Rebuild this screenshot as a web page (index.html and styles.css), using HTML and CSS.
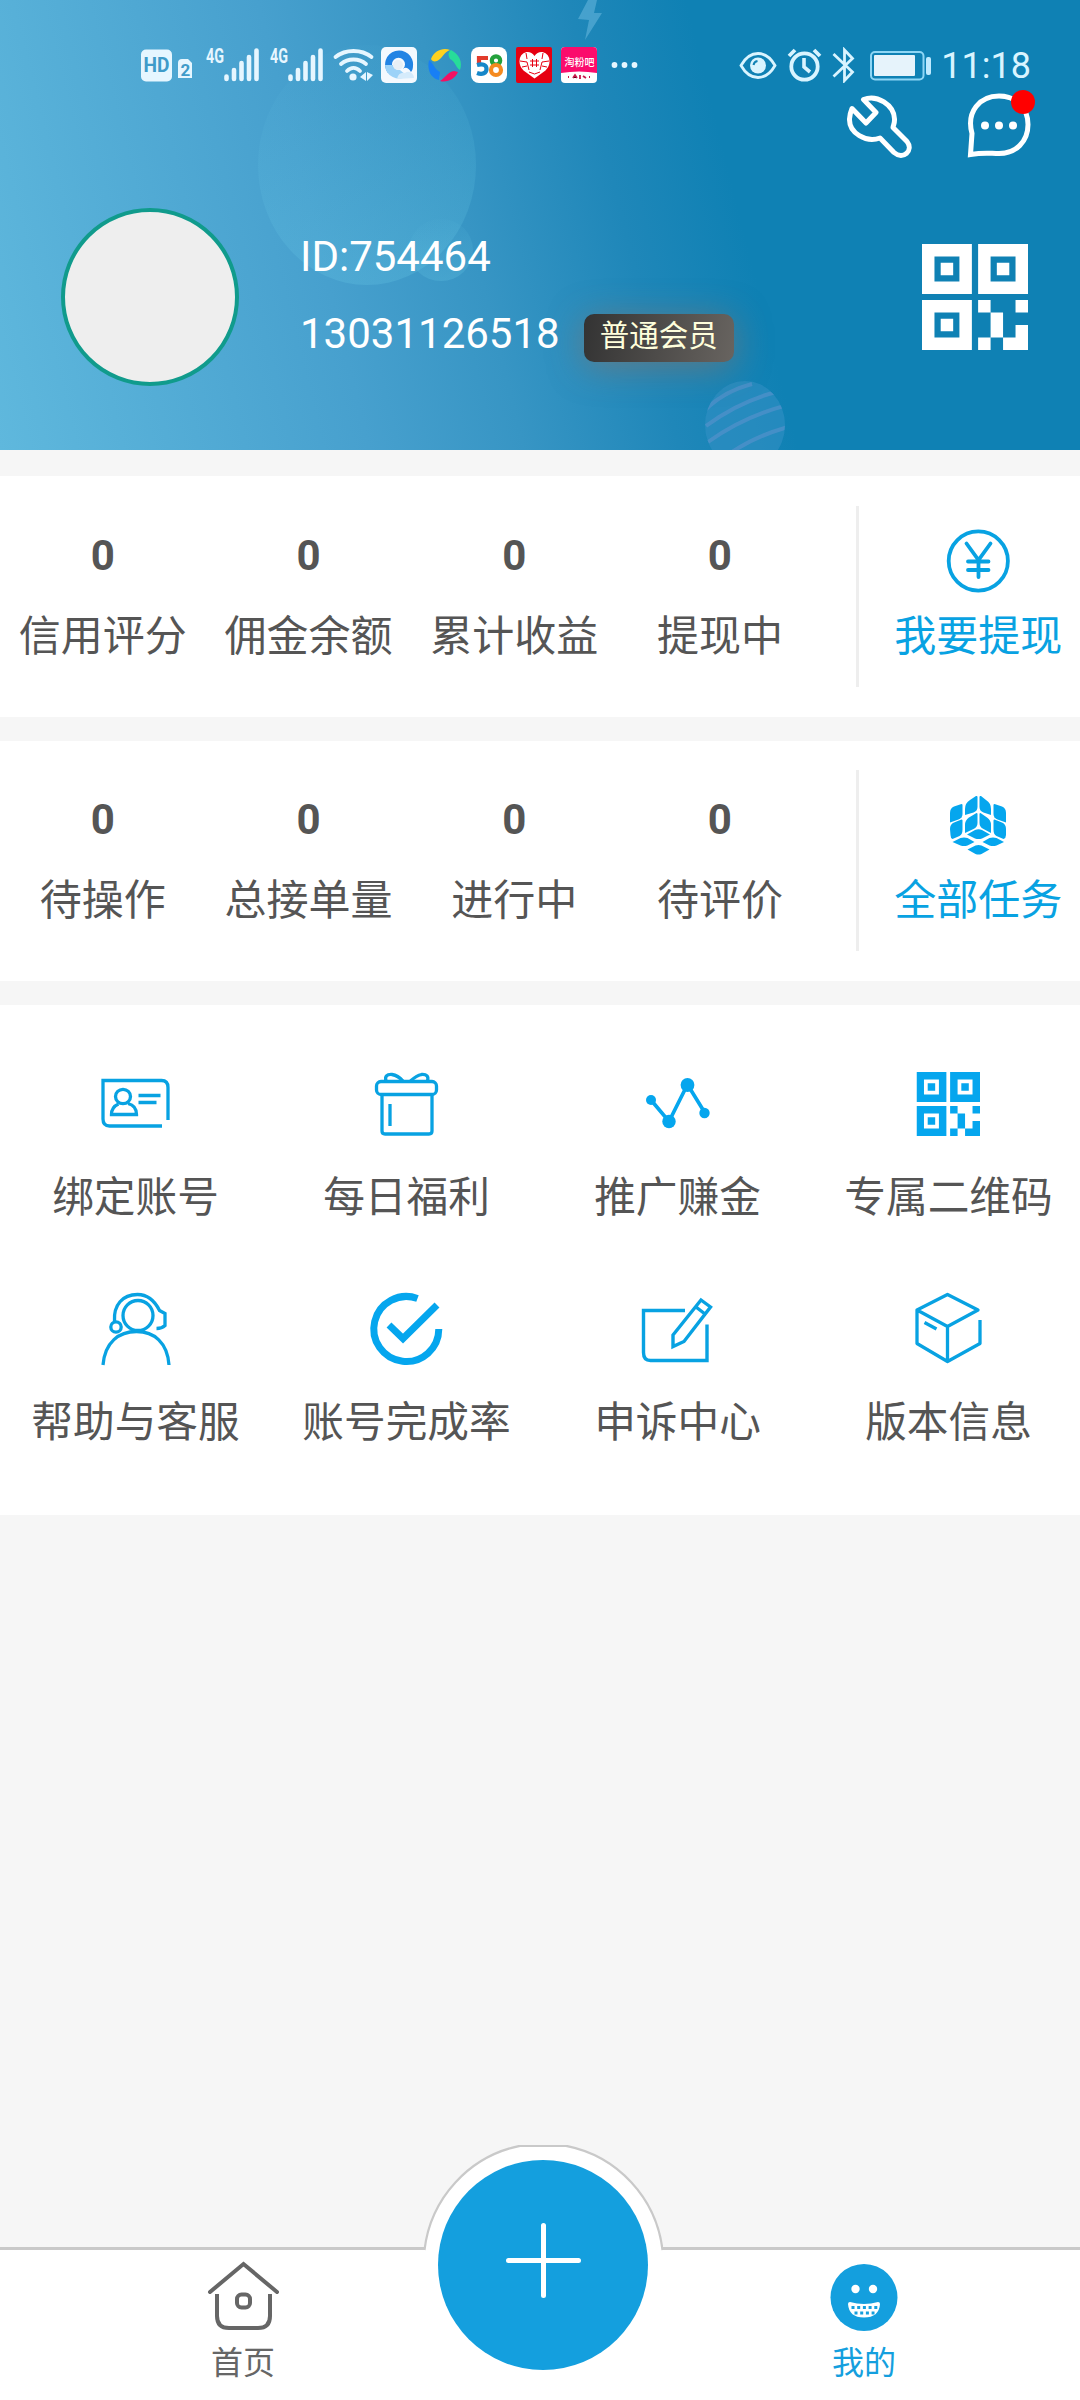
FILE: index.html
```html
<!DOCTYPE html>
<html lang="zh-CN">
<head>
<meta charset="utf-8">
<title>我的</title>
<link rel="stylesheet" href="styles.css">
</head>
<body>
<svg class="defs" width="0" height="0">
  <symbol id="qr" viewBox="0 0 17 17" preserveAspectRatio="none">
    <path fill="currentColor" fill-rule="evenodd" d="M0 0h8v8H0zM2 2v4h4V2zM3 3h2v2H3zM9 0h8v8H9zM11 2v4h4V2zM12 3h2v2h-2zM0 9h8v8H0zM2 11v4h4v-4zM3 12h2v2H3zM9 9h2v2H9zM15 9h2v2h-2zM11 11h2v4h-2zM9 15h2v2H9zM13 15h2v-2h2v4h-4z"/>
  </symbol>
  <symbol id="signal" viewBox="200 40 64 43">
    <text x="206" y="63" class="net" textLength="18" lengthAdjust="spacingAndGlyphs">4G</text>
    <path d="M226.500 76.500v2.500M234 70v9M241.500 63v16M249 57v22M256.500 50.500v28.500" fill="none" stroke="#e6f6ff" stroke-width="4.600" stroke-linecap="round"/>
  </symbol>
</svg>
<div class="screen">
  <header class="hero">
    <svg class="hero-art" viewBox="0 0 1080 450">
      <defs>
        <linearGradient id="ball" x1="0.300" y1="0" x2="0.500" y2="1"><stop offset="0" stop-color="#6fd0ea" stop-opacity="0.020"/><stop offset="1" stop-color="#6fd0ea" stop-opacity="0.220"/></linearGradient>
        <clipPath id="stripeClip"><ellipse cx="745" cy="425" rx="40" ry="44"/></clipPath>
      </defs>
      <ellipse cx="367" cy="165" rx="109" ry="120" fill="url(#ball)"/>
      <ellipse cx="441" cy="250" rx="32" ry="31" fill="url(#ball)"/>
      <path d="M588 0h9l-3 13h8l-17 27 4-20-11-1z" fill="#62b4da" opacity="0.600"/>
      <g clip-path="url(#stripeClip)">
        <rect x="700" y="380" width="90" height="72" fill="#2f8fc3" opacity="0.650"/>
        <path d="M704 411q20-20 48-27M706 426q32-24 70-34M708 442q36-26 80-37M732 452q24-16 56-25" fill="none" stroke="#5a93cd" stroke-width="4" opacity="0.600"/>
      </g>
    </svg>
    <div class="status">
      <svg width="34" height="36" viewBox="140 47 34 36"><rect x="141" y="49.500" width="31" height="32" rx="5" fill="#e6f6ff"/><text x="143.500" y="72" class="hd" textLength="26" lengthAdjust="spacingAndGlyphs">HD</text></svg>
      <svg width="26" height="36" viewBox="174 47 26 36"><path d="M178 63q0-4 4-4h6l4 4v15h-14z" fill="#e6f6ff"/><text x="180.500" y="75.500" class="sim">2</text></svg>
      <svg class="bars" width="64" height="43"><use href="#signal"/></svg>
      <svg class="bars" width="64" height="43"><use href="#signal"/></svg>
      <svg width="50" height="36" viewBox="328 47 50 36"><g fill="none" stroke="#e6f6ff" stroke-width="3.800" stroke-linecap="round"><path d="M335.500 57c10-8 26-8 36 0M341 64c7-6 18-6 25 0M347 71c4-4 9-4 13 0"/></g><circle cx="353" cy="77" r="3.600" fill="#e6f6ff"/><path d="M360 77l6-5v9zM373 75l-6 6v-9z" fill="#e6f6ff"/></svg>
      <svg width="45" height="36" viewBox="378 47 45 36"><rect x="381" y="47" width="36" height="36" rx="5" fill="#f4f9fe"/><path d="M388 73a14 14 0 1 1 25-7c0 3-1 5-2 6-3-5-6-5-8-3a6.500 6.500 0 1 0-9 0c-2 0-5 1-6 4z" fill="#2384e4"/><path d="M385 65a14 14 0 0 0 22 11l-7-6a6 6 0 0 1-7-5z" fill="#9bd2f8"/><path d="M397 79c1-5 4-7 8-6 3-3 9 0 9 5z" fill="#d5ebfb"/><circle cx="398" cy="65" r="5" fill="#e7eff5"/></svg>
      <svg width="43" height="36" viewBox="423 47 43 36"><path d="M431 59c3-9 13-12 19-9-6 2-8 9-13 11-3 1-5 0-6-2z" fill="#ffd21f"/><path d="M451 50c8 4 12 12 9 20-4-2-5-9-10-11-2-4-2-7 1-9z" fill="#27dc9a"/><path d="M458 72c-3 7-11 11-18 9 5-3 8-9 14-10z" fill="#f31163"/><path d="M429 60c-2 9 1 18 10 20l1-8c-6-3-5-7-11-12z" fill="#177ff5"/></svg>
      <svg width="45" height="36" viewBox="466 47 45 36"><rect x="471" y="47" width="36" height="36" rx="8" fill="#fff"/><g fill="none" stroke-width="4.200"><path d="M488 58h-9v6" stroke="#e23b2c"/><path d="M477 65c6-1.500 9.500 0 9.500 4s-4 6-9.500 4" stroke="#1687c9"/><circle cx="496" cy="60.500" r="4.200" stroke="#24a13c"/><circle cx="496" cy="70" r="5" stroke="#f58a1f"/></g></svg>
      <svg width="45" height="36" viewBox="511 47 45 36"><rect x="516" y="47" width="36" height="36" rx="2" fill="#e60012"/><path d="M534.500 78.500l-11-8q-4-4-4-9 0-8 7-9.500 5-.5 8 4 3-4.500 8-4 7 1.500 7 9.500 0 5-4 9z" fill="#fff"/><path d="M532.500 59v8M536.500 59v8M530 61h9M530 65h9M520 61l7 1 2 8M526 53l1 6M543 53l-1 6M549 61l-7 1-2 8M529 72l5.500 2 5.500-2M522 67l5-1M547 67l-5-1" stroke="#e60012" stroke-width="1" fill="none"/></svg>
      <svg width="45" height="36" viewBox="556 47 45 36"><rect x="561" y="47" width="36" height="36" rx="4" fill="#fff"/><path d="M561 73V51q0-4 4-4h28q4 0 4 4v22q-18-3-36 0z" fill="#fb0c6c"/><text x="564.500" y="66" class="brand" textLength="30">淘粉吧</text><path d="M568 77h1M573 78l2-3 2 3M580 75v4M583 76l3 2M589 77h1" stroke="#c9184b" stroke-width="1.800"/></svg>
      <svg width="40" height="36" viewBox="601 47 40 36"><g fill="#e6f6ff"><circle cx="614.500" cy="65" r="2.900"/><circle cx="624.500" cy="65" r="2.900"/><circle cx="634.500" cy="65" r="2.900"/></g></svg>
      <span class="spacer"></span>
      <svg width="44" height="36" viewBox="738 47 44 36"><path d="M742 65.500c9-16 25-16 34 0-9 16-25 16-34 0z" fill="none" stroke="#d9f4ff" stroke-width="2.800"/><circle cx="759" cy="65.500" r="8" fill="#d9f4ff"/><path d="M754.500 65a5 5 0 0 1 4-4" stroke="#1081b4" stroke-width="2" fill="none"/></svg>
      <svg width="46" height="36" viewBox="782 47 46 36"><g fill="none" stroke="#d9f4ff"><circle cx="805.500" cy="66.500" r="13.200" stroke-width="3.800"/><path d="M805 58v9l6 5" stroke-width="3.600"/><path d="M790 56l6-6M821 56l-6-6" stroke-width="3.800"/></g></svg>
      <svg width="34" height="36" viewBox="828 47 34 36"><path d="M834.500 54l19 18-8 8.500V50l8 8.500-19 18" fill="none" stroke="#d9f4ff" stroke-width="2.800"/></svg>
      <svg width="80" height="36" viewBox="862 47 80 36"><rect x="872" y="52" width="52.500" height="27.500" rx="4" fill="none" stroke="#8ed6f5" stroke-width="2"/><rect x="875" y="55" width="41" height="21" rx="1" fill="#e6f3fb"/><rect x="927" y="57" width="5" height="18" rx="2" fill="#bfeaff"/></svg>
      <span class="clock">11:18</span>
    </div>
    <div class="tools">
      <svg width="66" height="68" viewBox="846 92 66 68"><path d="M863.500 99.500C877 94 894 105 894.500 119c.2 4-1 6-1.500 8.500l14 14c7 9-4 19-13 11l-14-14.500c-14 5-31-5-30.500-19 .2-4 1-7 2.500-10.500l14 14.500 10-10.500z" fill="none" stroke="#fff" stroke-width="5" stroke-linejoin="round"/></svg>
      <svg width="80" height="72" viewBox="964 88 80 72"><path d="M970.500 154.500l1.500-21c-6-22 8-37.500 27-37.500 17 0 29 12 29 28.500 0 17-12 29-29 29-9 0-14-1.500-28.500 1z" fill="none" stroke="#fff" stroke-width="5"/><g fill="#fff"><circle cx="985" cy="125.500" r="4"/><circle cx="999" cy="125.500" r="4"/><circle cx="1013" cy="125.500" r="4"/></g><circle cx="1023" cy="102" r="12" fill="#f00"/></svg>
    </div>
    <div class="profile">
      <div class="avatar"></div>
      <div class="who">
        <div class="uid">ID:754464</div>
        <div class="phone">13031126518 <span class="level">普通会员</span></div>
      </div>
      <svg class="myqr" width="106" height="106"><use href="#qr"/></svg>
    </div>
  </header>

  <section class="stats">
    <div class="stat"><b>0</b><span>信用评分</span></div>
    <div class="stat"><b>0</b><span>佣金余额</span></div>
    <div class="stat"><b>0</b><span>累计收益</span></div>
    <div class="stat"><b>0</b><span>提现中</span></div>
    <a class="action">
      <svg width="66" height="66" viewBox="945 528 66 66"><g fill="none" stroke="#08a2e2" stroke-width="3.800" stroke-linecap="round"><circle cx="978.300" cy="561" r="29.600"/><path d="M966.500 543.500L978.500 560l12-16.500M978.500 560v17M968 561.500h20.500M968 570h20.500"/></g></svg>
      <span>我要提现</span>
    </a>
  </section>

  <section class="stats">
    <div class="stat"><b>0</b><span>待操作</span></div>
    <div class="stat"><b>0</b><span>总接单量</span></div>
    <div class="stat"><b>0</b><span>进行中</span></div>
    <div class="stat"><b>0</b><span>待评价</span></div>
    <a class="action">
      <svg width="66" height="66" viewBox="0 1 66 66"><g fill="#05a6ee"><path d="M20 18q0-6 5-9l6-4q1.500-.5 1.500 1v10q0 4-4 5.500L20 24z"/><path d="M5 22q0-5 4-6.500l7.500-2.500q1 0 1 1v9q0 4-4 5.500L5 31.500z"/><path d="M20 34q0-5 4-7.500l7.500-4.500q1 0 1 1v9q0 4-4 6L20 42z"/><path d="M5 38q0-5 4-6.500l7.500-3q1 0 1 1v9q0 5-3 6.500l-7 3q-2-1-2-4z"/><path d="M46 18q0-6-5-9l-5-4q-1.500-.5-1.500 1v10q0 4 4 5.500L46 24z"/><path d="M61 22q0-5-4-6.500L49.500 13q-1 0-1 1v9q0 4 4 5.500l8.500 3z"/><path d="M46 34q0-5-4-7.500L35.500 22q-1 0-1 1v9q0 4 4 6L46 42z"/><path d="M61 38q0-5-4-6.500l-7.500-3q-1 0-1 1v9q0 5 3 6.500l7 3q2.500-1 2.500-4z"/><path d="M22 43.500l8-4.500q3.500-1.300 7 0l8 4.500-8 4q-3.500 1.200-7 0zM7.500 51l8-4q3.500-1.200 7 0l7 4-7 3.500q-3.500 1.200-7 0zM37.500 51l7-4q3.500-1.200 7 0l7.500 4-7.500 3.500q-3.500 1.200-7 0zM22.500 58.500l8-4q3-1.200 6 0l8 4-8 4.500q-3 1.200-6 0z"/></g></svg>
      <span>全部任务</span>
    </a>
  </section>

  <section class="menu">
    <a class="item"><svg width="80" height="80" viewBox="95.500 1064 80 80"><g fill="none" stroke="#08a2e2" stroke-width="3.300"><path d="M161.500 1126H109q-6.500 0-6.500-7v-38.500H161q6.500 0 6.500 7V1120"/><ellipse cx="122.500" cy="1096.500" rx="7.500" ry="7.200"/><path d="M118 1104q-7 3-7 10.500h25q0-9-8.500-11M138 1095.500h22M138 1102.500h18"/></g></svg><span>绑定账号</span></a>
    <a class="item"><svg width="80" height="80" viewBox="366.500 1064 80 80"><g fill="none" stroke="#08a2e2" stroke-width="3.300"><rect x="376" y="1081.500" width="60" height="13" rx="4.500"/><path d="M381.500 1095v36q0 3 3 3h44q3 0 3-3v-36M389.500 1104v22M385.500 1081q-2-7 6-6.500 6 1 11 6.500M410 1081q6-5.500 11-6.500 8-.5 6 6.500"/></g></svg><span>每日福利</span></a>
    <a class="item"><svg width="80" height="80" viewBox="637.500 1064 80 80"><path d="M650.500 1100l18 21.500 18.500-37 17.500 28.500" fill="none" stroke="#05a6ee" stroke-width="3.700"/><g fill="#05a6ee"><circle cx="650.500" cy="1100" r="5"/><circle cx="668.500" cy="1121.500" r="6.700"/><circle cx="687" cy="1085" r="6.900"/><circle cx="704" cy="1113" r="5.200"/></g></svg><span>推广赚金</span></a>
    <a class="item"><svg width="80" height="80" viewBox="908.500 1064 80 80"><use href="#qr" x="916" y="1072" width="63.500" height="64"/></svg><span>专属二维码</span></a>
    <a class="item"><svg width="80" height="80" viewBox="95.500 1289 80 80"><g fill="none" stroke="#08a2e2" stroke-width="3.300"><ellipse cx="137.500" cy="1315.500" rx="15" ry="15"/><circle cx="115.500" cy="1327" r="5.200"/><path d="M114 1321c-1-16 8-26.500 23-26.500 12 0 18 8 22 16l5.500 3v12q-3 3-8.500 3M102.500 1365c2-23 16-33.500 33.500-33.500s31 11 32.500 33.500"/></g></svg><span>帮助与客服</span></a>
    <a class="item"><svg width="80" height="80" viewBox="366.500 1289 80 80"><path d="M417 1298.500a32.500 32.500 0 1 0 21.300 30.500M388.500 1325l14 13.500 34-33.500" fill="none" stroke="#05a6ee" stroke-width="7"/></svg><span>账号完成率</span></a>
    <a class="item"><svg width="80" height="80" viewBox="637.500 1289 80 80"><g fill="none" stroke="#08a2e2" stroke-width="3.400"><path d="M684.500 1310.500h-41.500v42q0 8 7 8h56.500v-36M700.500 1300l9.500 7-26.500 34.500-11 5v-11.500zM695.500 1307l9 7"/></g></svg><span>申诉中心</span></a>
    <a class="item"><svg width="80" height="80" viewBox="908.500 1289 80 80"><g fill="none" stroke="#08a2e2" stroke-width="3.300" stroke-linejoin="round"><path d="M979.500 1320v23.500l-32.500 18-30.500-18V1310l30.500-15.500 30.500 15.500-30.500 16.500-30.500-16.500M947 1326.500v35M924 1322.500l12 6.500"/></g></svg><span>版本信息</span></a>
  </section>

  <nav class="tabbar">
    <a class="tab home"><svg width="76" height="72" viewBox="205 2260 76 72"><g fill="none" stroke="#666" stroke-width="4" stroke-linecap="round"><path d="M210 2292l33.500-28 33.500 28"/><path d="M217 2296v20q0 12 12 12h29q12 0 12-12v-20" stroke-linecap="square"/><rect x="237" y="2294.500" width="13" height="13" rx="4.500"/></g></svg><span>首页</span></a>
    <a class="fab">
      <svg width="240" height="255" viewBox="423 2145 240 255"><path d="M424.500 2249A120.500 120.500 0 0 1 520 2145.700h46A120.500 120.500 0 0 1 662.500 2249V2260H424.500z" fill="#fff"/><path d="M424.500 2250A120.500 120.500 0 0 1 520 2145.800h46A120.500 120.500 0 0 1 662.500 2250" fill="none" stroke="#c9c9c9" stroke-width="2.200"/><circle cx="543" cy="2265" r="105" fill="#149fde"/><path d="M508.500 2260.500h70M543.500 2225.500v70" stroke="#fff" stroke-width="5" stroke-linecap="round"/></svg>
    </a>
    <a class="tab mine"><svg width="76" height="72" viewBox="826 2260 76 72"><circle cx="864" cy="2297.500" r="33.500" fill="#149fde"/><circle cx="855.500" cy="2289" r="4.200" fill="#fff"/><circle cx="873" cy="2289" r="4.200" fill="#fff"/><path d="M848 2304q0-2 2-2 14 4 28 0 2 0 2 2-1 13.500-16 13.500t-16-13.500z" fill="#fff"/><path d="M851.500 2307.500h26M854.500 2313h20" stroke="#149fde" stroke-width="3.200" stroke-dasharray="3 2.700"/></svg><span>我的</span></a>
  </nav>
</div>
</body>
</html>
```
FILE: styles.css
```css
* { box-sizing: border-box; }
body {
  margin: 0;
  font-family: Roboto, "Noto Sans CJK SC", sans-serif;
  color: #555;
}
svg { display: block; flex: none; }
.defs { position: absolute; }
.screen {
  width: 1080px;
  height: 2400px;
  background: #f6f6f6;
  display: flex;
  flex-direction: column;
  overflow: hidden;
}

/* Header */
.hero {
  position: relative;
  height: 450px;
  flex: none;
  color: #fff;
  background: linear-gradient(76deg, #5fb8dd 0%, #47a0ce 31%, #3795c4 44%, #1f87b9 57%, #0f81b4 67%);
}
.hero-art { position: absolute; inset: 0; }
.status {
  position: relative;
  display: flex;
  align-items: flex-end;
  height: 83px;
  padding: 0 49px 0 140px;
}
.status .spacer { flex: 1; }
.clock { font-size: 36px; line-height: 33px; color: #d9f4ff; }
.net { font: 700 21px Roboto, sans-serif; fill: #e6f6ff; }
.hd { font: 700 21px Roboto, sans-serif; fill: #3f9bc9; }
.sim { font: 700 17px Roboto, sans-serif; fill: #3f9bc9; }
.brand { font: 500 10px "Noto Sans CJK SC", sans-serif; fill: #fff; }
.tools {
  position: relative;
  display: flex;
  justify-content: flex-end;
  gap: 52px;
  height: 77px;
  padding: 5px 36px 0 0;
  align-items: flex-end;
}
.profile {
  position: relative;
  display: flex;
  align-items: center;
  height: 178px;
  margin-top: 48px;
  padding: 0 52px 0 61px;
}
.avatar {
  width: 178px;
  height: 178px;
  border: 4px solid #109b8c;
  border-radius: 50%;
  background: #eee;
}
.who { flex: 1; padding: 0 0 4px 61px; font-size: 42px; line-height: 77px; }
.phone { display: flex; align-items: center; }
.level {
  height: 48px;
  margin: 9px 0 0 24px;
  padding: 0 16px;
  border-radius: 10px;
  font-size: 29.500px;
  line-height: 44px;
  color: #ffffdc;
  background: linear-gradient(100deg, #333, #686460);
  box-shadow: 0 5px 34px rgba(150, 110, 90, 0.55);
}

/* Counters */
.stats {
  display: flex;
  flex: none;
  height: 240px;
  background: #fff;
  padding-top: 29px;
}
.hero + .stats { margin-top: 26px; height: 241px; padding-top: 30px; }
.stats + .stats, .menu { margin-top: 24px; }
.stat {
  width: 205.700px;
  display: flex;
  flex-direction: column;
  align-items: center;
  font-size: 42px;
}
.stat b { line-height: 48px; margin-top: 26px; font-size: 42px; }
.stat span { line-height: 60px; margin-top: 27px; white-space: nowrap; }
.action {
  margin-left: 33px;
  flex: 1;
  height: 181px;
  border-left: 3px solid #eee;
  padding: 22px 0 0 18px;
  display: flex;
  flex-direction: column;
  align-items: center;
  font-size: 42px;
  color: #08a2e2;
}
.action span { line-height: 60px; margin-top: 13px; white-space: nowrap; }

/* Shortcuts */
.menu {
  display: grid;
  grid-template-columns: repeat(4, 271px);
  grid-auto-rows: 225px;
  height: 510px;
  flex: none;
  background: #fff;
  padding-top: 59px;
}
.item { display: flex; flex-direction: column; align-items: center; font-size: 41.700px; }
.item svg { color: #05a6ee; }
.item span { line-height: 60px; margin-top: 24px; white-space: nowrap; }

/* Bottom bar */
.tabbar {
  position: relative;
  display: flex;
  justify-content: space-between;
  height: 153px;
  margin-top: auto;
  background: #fff;
  border-top: 3px solid #c9c9c9;
  font-size: 32px;
}
.tab { display: flex; flex-direction: column; align-items: center; padding-top: 10px; }
.tab span { line-height: 40px; margin-top: 11px; }
.home { width: 486px; color: #666; }
.mine { width: 432px; color: #149fde; }
.fab { position: absolute; left: 423px; top: -105px; }
```
